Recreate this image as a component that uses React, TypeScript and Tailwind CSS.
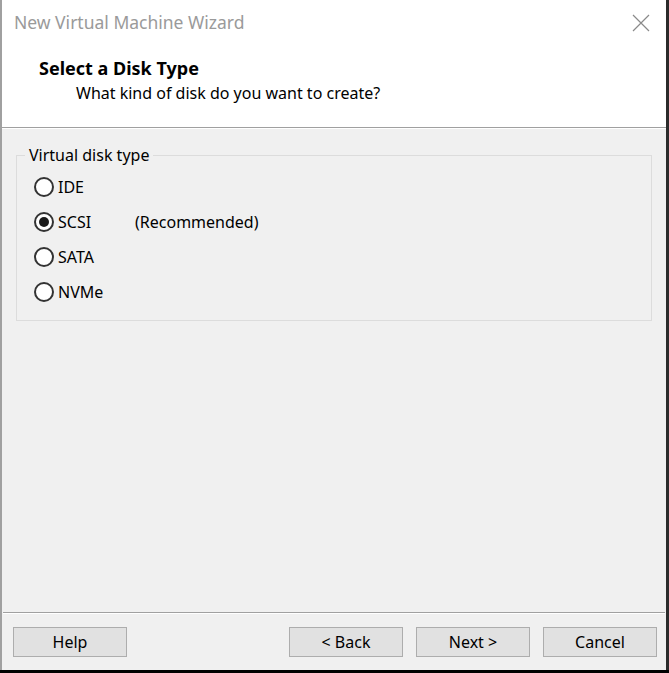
import React, { useState } from 'react';

const DISK_TYPES = ['IDE', 'SCSI', 'SATA', 'NVMe'];

const Radio: React.FC<{ checked: boolean }> = ({ checked }) => (
  <span className="w-[20px] h-[20px] rounded-full border-[2px] border-[#333] bg-white flex items-center justify-center shrink-0">
    {checked && <span className="w-[10px] h-[10px] rounded-full bg-[#1a1a1a]" />}
  </span>
);

const WinButton: React.FC<{ label: string }> = ({ label }) => (
  <button className="w-[114px] h-[30px] bg-[#e1e1e1] border border-[#adadad] text-[16px] text-black flex items-center justify-center">
    {label}
  </button>
);

export default function App() {
  const [disk, setDisk] = useState('SCSI');

  return (
    <div className="w-[669px] h-[673px] flex flex-col bg-[#f0f0f0] font-['Noto_Sans','Open_Sans',sans-serif] text-[#000] overflow-hidden">
      <div className="flex-1 flex flex-col border-l-[2px] border-l-[#a0a0a0] border-r-[3px] border-r-[#2b2b2b]">
        {/* Title bar + header */}
        <div className="bg-white h-[127px] flex flex-col">
          <div className="h-[45px] flex items-center justify-between pl-[12px] pr-[14px]">
            <span className="text-[17.5px] text-[#9a9a9a]">New Virtual Machine Wizard</span>
            <svg width="18" height="18" viewBox="0 0 18 18" className="mr-[2px]">
              <path d="M1 1 L17 17 M17 1 L1 17" stroke="#8a8a8a" strokeWidth="1.2" />
            </svg>
          </div>
          <div className="pl-[37px] pt-[11px]">
            <div className="text-[18px] font-bold leading-[24px]">Select a Disk Type</div>
            <div className="text-[16px] leading-[22px] pl-[37px] mt-[2px]">What kind of disk do you want to create?</div>
          </div>
        </div>
        <div className="h-[2px] bg-[#a0a0a0] border-b border-b-white" />

        {/* Content */}
        <div className="flex-1 px-[14px] pt-[26px]">
          <div className="relative border border-[#dcdcdc] h-[166px] pt-[20px] pl-[17px]">
            <span className="absolute -top-[12px] left-[8px] bg-[#f0f0f0] px-[4px] text-[16px] leading-[22px]">
              Virtual disk type
            </span>
            <div className="flex flex-col gap-[13px]">
              {DISK_TYPES.map(t => (
                <label key={t} className="flex items-center h-[22px] cursor-default" onClick={() => setDisk(t)}>
                  <Radio checked={disk === t} />
                  <span className="text-[16px] ml-[4px] w-[77px]">{t}</span>
                  {t === 'SCSI' && <span className="text-[16px]">(Recommended)</span>}
                </label>
              ))}
            </div>
          </div>
        </div>

        {/* Footer */}
        <div className="h-[2px] bg-[#a0a0a0] border-b border-b-white mx-[1px]" />
        <div className="h-[56px] flex items-start pt-[13px] pl-[11px] pr-[9px]">
          <WinButton label="Help" />
          <div className="flex-1" />
          <div className="flex gap-[13px]">
            <WinButton label="< Back" />
            <WinButton label="Next >" />
            <WinButton label="Cancel" />
          </div>
        </div>
      </div>
      <div className="h-[3px] bg-black" />
    </div>
  );
}
